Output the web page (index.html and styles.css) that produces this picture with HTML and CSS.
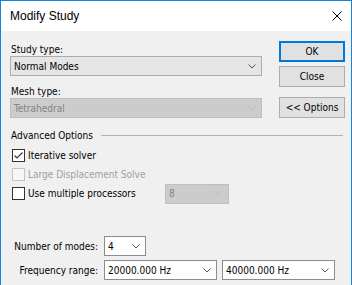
FILE: index.html
```html
<!DOCTYPE html>
<html lang="en">
<head>
  <meta charset="UTF-8">
  <title>Modify Study</title>
  <link rel="stylesheet" href="styles.css">
</head>
<body>
  <div class="window">
    <div class="titlebar">
      <span class="title">Modify Study</span>
      <svg class="close-x" width="10" height="10" viewBox="0 0 10 10">
        <path d="M0.5 0.5 L9.5 9.5 M9.5 0.5 L0.5 9.5" stroke="#000" stroke-width="1" fill="none"/>
      </svg>
    </div>

    <div class="client">
      <div class="top-row">
        <div class="fields">
          <div class="field-label">Study type:</div>
          <div class="combo">
            <span>Normal Modes</span>
            <svg class="chev" width="8" height="5" viewBox="0 0 8 5"><path d="M0.5 0.5 L4 4 L7.5 0.5" fill="none" stroke="#555"/></svg>
          </div>
          <div class="field-label mesh-label">Mesh type:</div>
          <div class="combo disabled">
            <span>Tetrahedral</span>
            <svg class="chev" width="8" height="5" viewBox="0 0 8 5"><path d="M0.5 0.5 L4 4 L7.5 0.5" fill="none" stroke="#bcbcbc"/></svg>
          </div>
        </div>
        <div class="buttons">
          <div class="btn default">OK</div>
          <div class="btn">Close</div>
          <div class="btn options">&lt;&lt; Options</div>
        </div>
      </div>

      <div class="group-head">
        <span>Advanced Options</span>
        <div class="rule"></div>
      </div>

      <div class="checks">
        <div class="check-row">
          <div class="check">
            <span class="box">
              <svg width="11" height="11" viewBox="0 0 11 11"><path d="M1.5 5.5 L4 8 L9.5 2.5" fill="none" stroke="#333" stroke-width="1.1"/></svg>
            </span>
            <span class="check-text"><u>I</u>terative solver</span>
          </div>
        </div>
        <div class="check-row">
          <div class="check disabled">
            <span class="box"></span>
            <span class="check-text">Large Displacement Solve</span>
          </div>
        </div>
        <div class="check-row">
          <div class="check wide">
            <span class="box"></span>
            <span class="check-text">Use multiple processors</span>
          </div>
          <div class="combo disabled small">
            <span>8</span>
            <svg class="chev" width="8" height="5" viewBox="0 0 8 5"><path d="M0.5 0.5 L4 4 L7.5 0.5" fill="none" stroke="#bcbcbc"/></svg>
          </div>
        </div>
      </div>

      <div class="params">
        <div class="param-label">Number of modes:</div>
        <div class="combo white modes">
          <span>4</span>
          <svg class="chev" width="8" height="5" viewBox="0 0 8 5"><path d="M0.5 0.5 L4 4 L7.5 0.5" fill="none" stroke="#555"/></svg>
        </div>
        <div class="param-label">Frequency range:</div>
        <div class="range">
          <div class="combo white freq">
            <span>20000.000 Hz</span>
            <svg class="chev" width="8" height="5" viewBox="0 0 8 5"><path d="M0.5 0.5 L4 4 L7.5 0.5" fill="none" stroke="#555"/></svg>
          </div>
          <div class="combo white freq">
            <span>40000.000 Hz</span>
            <svg class="chev" width="8" height="5" viewBox="0 0 8 5"><path d="M0.5 0.5 L4 4 L7.5 0.5" fill="none" stroke="#555"/></svg>
          </div>
        </div>
      </div>
    </div>
  </div>
</body>
</html>
```

FILE: styles.css
```css
body { margin: 0; background: #f0f0f0; }

.window {
  width: 352px; height: 285px; box-sizing: border-box;
  border: 1px solid #1883d7; border-bottom: none;
  background: #f0f0f0; overflow: hidden;
  font-family: "DejaVu Sans Condensed", "DejaVu Sans", sans-serif;
  font-stretch: condensed; font-size: 10px; color: #000;
}

.titlebar {
  height: 30px; background: #fff;
  display: flex; align-items: center; justify-content: space-between;
  padding: 0 9px 0 9px;
}
.title { font-family: "Liberation Sans", Arial, sans-serif; font-stretch: normal; font-size: 12px; line-height: 14px; }
.close-x { display: block; }

.client { padding: 0 6px 0 9px; }

.top-row { display: flex; gap: 17px; align-items: flex-start; }
.fields { width: 252px; padding-top: 12px; }
.field-label { line-height: 13px; padding-left: 1px; }
.mesh-label { margin-top: 9px; }

.combo {
  height: 20px; box-sizing: border-box;
  display: flex; align-items: center; justify-content: space-between;
  padding: 0 5px 0 3px;
  background: #e5e5e5; border: 1px solid #acacac;
}
.combo.disabled { background: #cccccc; border-color: #bfbfbf; color: #838383; }
.combo.white { background: #fff; border-color: #8c8c8c; }
.chev { display: block; }

.buttons { width: 66px; padding-top: 10px; display: flex; flex-direction: column; gap: 4px; }
.btn {
  height: 21px; box-sizing: border-box;
  display: flex; align-items: center; justify-content: center;
  background: #e1e1e1; border: 1px solid #adadad;
}
.btn.default { border-color: #0078d7; box-shadow: inset 0 0 0 1px #0078d7; }
.btn.options { margin-top: 6px; }

.group-head { display: flex; align-items: center; gap: 8px; margin-top: 11px; line-height: 13px; padding-left: 1px; padding-right: 2px; }
.rule { flex: 1; height: 1px; background: #b4b4b4; }

.checks { margin-top: 4px; padding-left: 2px; }
.check-row { display: flex; align-items: center; height: 19px; }
.check { display: flex; align-items: center; gap: 3px; }
.check.wide { width: 153px; }
.box {
  width: 13px; height: 13px; box-sizing: border-box;
  border: 1px solid #333; background: #fff;
  display: flex; align-items: center; justify-content: center;
}
.box svg { display: block; }
.check.disabled .box { border-color: #c4c4c4; background: #f7f7f7; }
.check.disabled .check-text { color: #a0a0a0; }
.check-text u { text-decoration: none; }

.combo.small { width: 64px; }

.params {
  margin-top: 33px;
  display: grid; grid-template-columns: 88px auto; column-gap: 6px; row-gap: 4px;
  align-items: center; justify-items: start;
}
.param-label { justify-self: end; }
.modes { width: 42px; }
.range { display: flex; gap: 5px; }
.freq { width: 113px; }
```
